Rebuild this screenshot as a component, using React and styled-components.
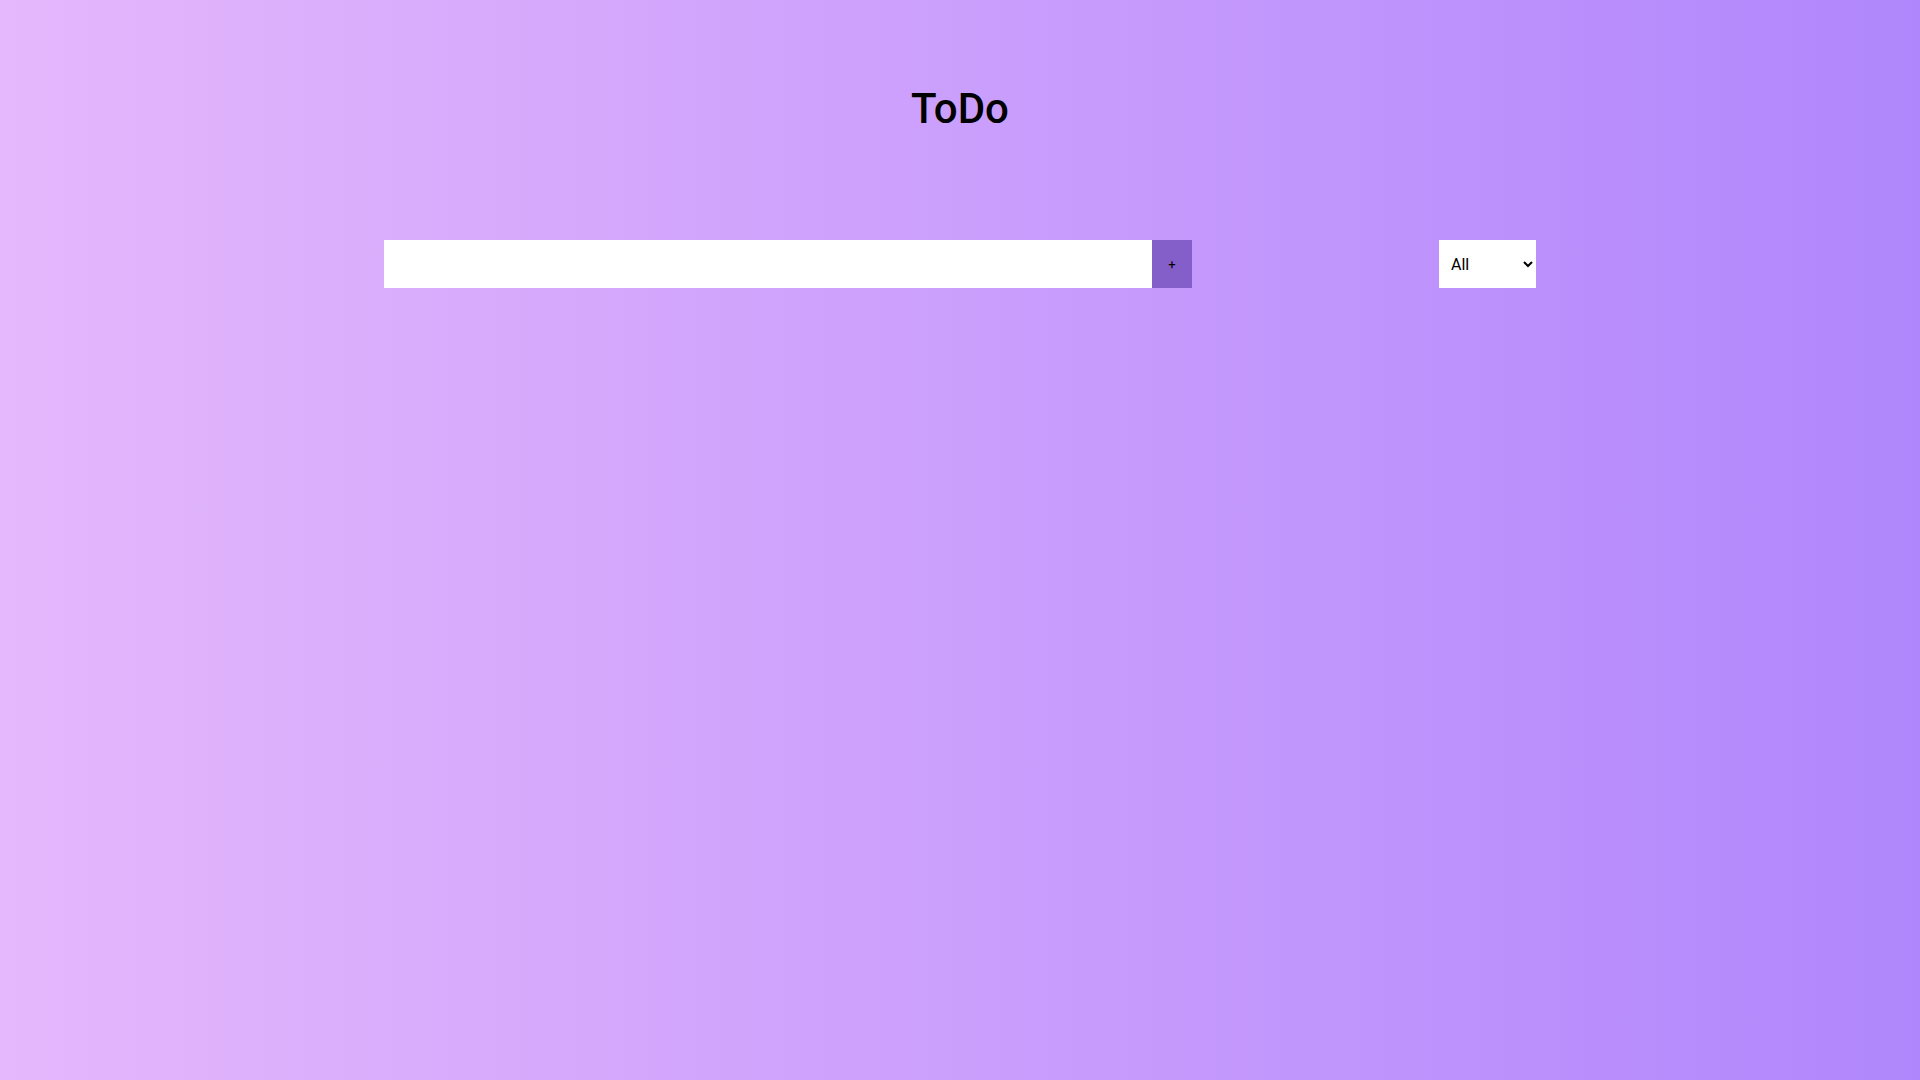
import styled, { createGlobalStyle } from "styled-components";
import { useState } from "react";

const GlobalStyle = createGlobalStyle`
    * {
        margin: 0;
        padding: 0;
        box-sizing: border-box;
    }
    body {
        min-height: 100vh;
        background-image: linear-gradient(to right, #e5b7fc 0%, #b086fc 100%);
        font-family: Roboto, "Liberation Sans", sans-serif;
        color: #000;
    }
`;

const App = () => {
    const [text, setText] = useState("");
    const [status, setStatus] = useState("all");

    return (
        <>
            <GlobalStyle />
            <Page>
                <Header>
                    <h1>ToDo</h1>
                </Header>
                <Form onSubmit={(e) => e.preventDefault()}>
                    <InputGroup>
                        <TodoInput type="text" value={text} onChange={(e) => setText(e.target.value)} />
                        <AddButton type="submit">+</AddButton>
                    </InputGroup>
                    <FilterSelect value={status} onChange={(e) => setStatus(e.target.value)}>
                        <option value="all">All</option>
                        <option value="completed">Completed</option>
                        <option value="uncompleted">Uncompleted</option>
                    </FilterSelect>
                </Form>
            </Page>
        </>
    );
};

export default App;

const Page = styled.div`
    min-height: 100vh;
    display: flex;
    flex-direction: column;
    align-items: center;
`;

const Header = styled.header`
    padding-top: 81px;
    height: 160px;
    h1 {
        font-size: 42px;
        font-weight: 500;
        line-height: 56px;
    }
`;

const Form = styled.form`
    width: 1152px;
    margin-top: 80px;
    display: flex;
    justify-content: space-between;
    align-items: center;
`;

const InputGroup = styled.div`
    display: flex;
`;

const TodoInput = styled.input`
    width: 768px;
    height: 48px;
    border: none;
    outline: none;
    background: #fff;
    padding: 0 12px;
    font-size: 16px;
    font-family: inherit;
`;

const AddButton = styled.button`
    width: 40px;
    height: 48px;
    border: none;
    background: #845ec9;
    color: #000;
    font-size: 13px;
    font-family: Roboto, sans-serif;
    cursor: pointer;
`;

const FilterSelect = styled.select`
    width: 97px;
    height: 48px;
    border: none;
    outline: none;
    background: #fff;
    padding: 0 6px 0 8px;
    font-size: 16px;
    font-family: Roboto, "Liberation Sans", sans-serif;
    color: #000;
    cursor: pointer;
`;
